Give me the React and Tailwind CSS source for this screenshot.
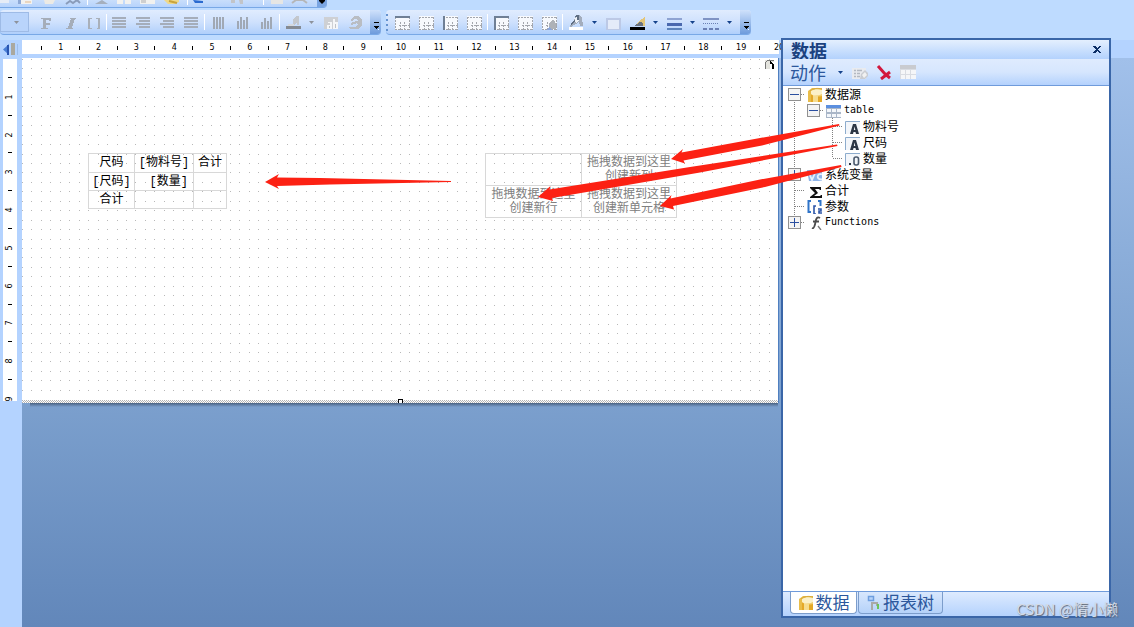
import React from "react";

const CJK = "font-['Liberation_Mono','Noto_Sans_CJK_SC',sans-serif]";
const STEP = 9.45;

function dotPath(cols, rows) {
  let d = "";
  for (let r = 0; r <= rows; r++) {
    for (let c = 0; c <= cols; c++) {
      d += `M${Math.round(c * STEP)} ${Math.round(r * STEP)}h1v1h-1z`;
    }
  }
  return d;
}

function ToolButton({ label, children }) {
  return (
    <button type="button" aria-label={label} className="flex h-full w-6 shrink-0 items-end justify-center pb-[3px]">
      <svg width="16" height="16" viewBox="0 0 16 16" shapeRendering="crispEdges">
        {children}
      </svg>
    </button>
  );
}

function Arrow({ label, color = "#15428b" }) {
  return (
    <button type="button" aria-label={label} className="flex h-full w-3 shrink-0 items-center justify-center">
      <svg width="5" height="3" viewBox="0 0 5 3">
        <path d="M0 0h5L2.5 3z" fill={color} />
      </svg>
    </button>
  );
}

function Separator() {
  return <span className="mx-px h-4 w-px shrink-0 bg-white" />;
}

function Overflow({ label }) {
  return (
    <button
      type="button"
      aria-label={label}
      className="flex h-full w-[11px] shrink-0 items-end justify-center rounded-r bg-gradient-to-b from-[#cfe1fb] to-[#6d9bdc] pb-1"
    >
      <svg width="6" height="8" viewBox="0 0 6 8" shapeRendering="crispEdges">
        <path d="M1 0h5v1H1z" fill="#000" />
        <path d="M0 4h6L3 7z" fill="#000" />
        <path d="M5 7h1v1H4z" fill="#fff" />
      </svg>
    </button>
  );
}

const Lines = ({ rows }) => rows.map(([x, w], i) => <path key={i} d={`M${x} ${2 + i * 3}h${w}v2h-${w}z`} fill="#a5adba" />);

const Bars = ({ tops }) =>
  tops.map((y, i) => <path key={i} d={`M${3 + i * 3} ${y}h2V14h-2z`} fill="#a0a8b4" />);

function BorderIcon({ top, left, paint }) {
  return (
    <>
      <path d="M1 1h15v14H1z" fill="#f7f9fd" />
      <path d="M1 2.5h15M5 10.5h11M1 14.500h15" stroke="#a3a6ad" strokeWidth="1" strokeDasharray="2 1" />
      <path d="M1.5 2v13M6.5 7v8M10.5 7v8M15.5 2v13" stroke="#a3a6ad" strokeWidth="1" strokeDasharray="2 1" />
      {top && <path d="M1 1h15v2H1z" fill="#6f7f95" />}
      {left && <path d="M1 1h2v14H1z" fill="#6f7f95" />}
      {paint && <path d="M8 14V9l3-4h2l2 4v5z" fill="#aeb2b8" />}
      {paint && <path d="M5 15l4-3 2 3z" fill="#8aa6dc" />}
    </>
  );
}

function TopStrip() {
  return (
    <div className="flex h-2 w-[327px] overflow-hidden rounded-br border-b border-[#78a8e6] bg-gradient-to-b from-[#c9defb] to-[#b6d3fc]">
      <svg className="w-[317px]" height="7" viewBox="0 0 317 7">
        <path d="M0 0h9v3H0z" fill="#e6ecf6" />
        <path d="M18 0h14v4H18z" fill="#f2f2f0" />
        <path d="M18 0h3v4h-3z" fill="#8ea9d6" />
        <path d="M25 2h6" stroke="#e1b98e" />
        <path d="M44 0h11l-2 4h-8z" fill="#eceae4" />
        <path d="M66 4l4-3 3 2 4-3 3 3" stroke="#8a9cba" strokeWidth="2" fill="none" />
        <path d="M87.500 0v5" stroke="#fff" />
        <path d="M95 4l7-4 6 4z" fill="#a5afbd" />
        <path d="M117 0h6v4h-6zM125 0h6v4h-6zM140 0h15v4h-15z" fill="#f1f1ef" />
        <path d="M141 0h5v3h-5z" fill="#cfcfcf" />
        <path d="M164 0h15v2l-5 2h-6z" fill="#efd98a" />
        <path d="M169 1l8 2" stroke="#c9a33c" strokeWidth="2" />
        <path d="M187.500 0v5" stroke="#fff" />
        <path d="M193 0l2 3h8V1z" fill="#2a6ad0" />
        <path d="M231 0h4v3h-4zM239 0h4v4h-3z" fill="#c2c4c8" />
        <path d="M263.500 0v5" stroke="#fff" />
        <path d="M271 0h12v4h-12z" fill="#e6e6e4" />
        <path d="M292 3l4-3h7l4 3" stroke="#b5b6b8" strokeWidth="2" fill="none" />
      </svg>
      <button type="button" aria-label="标准工具栏选项" className="flex w-[10px] items-start justify-center bg-[#7aa5e2]">
        <svg width="8" height="5" viewBox="0 0 8 5">
          <path d="M1 0h6v1L4 4 1 1z" fill="#000" />
        </svg>
      </button>
    </div>
  );
}

const BAR = "flex h-[25px] items-stretch rounded border-b border-[#78a8e6] bg-gradient-to-b from-[#e0ecfe] via-[#cfe1fd] to-[#b0cffb]";

function TextToolbar() {
  return (
    <div className={BAR}>
      <button
        type="button"
        aria-label="字号"
        className="mr-[5px] mt-[2px] flex h-5 w-[29px] items-center justify-end border border-[#9ebbe6] bg-[#b9d4fb] pr-[9px]"
      >
        <svg width="5" height="3" viewBox="0 0 5 3">
          <path d="M0 0h5L2.500 3z" fill="#8d929b" />
        </svg>
      </button>
      <ToolButton label="粗体">
        <path d="M3 3h10v3h-2V5H8v3h4v2H8v3h2v1H3v-1h2V4H3z" fill="#a5adb9" />
      </ToolButton>
      <ToolButton label="斜体">
        <path d="M8 3h6v1h-1l-3 9h1v1H4v-1h2l3-9H8z" fill="#a5adb9" />
      </ToolButton>
      <ToolButton label="下划线">
        <path d="M2 3h4v1H4v9h2v1H2zM10 3h4v11h-3v-1h1V4h-2z" fill="#a9b0ba" />
      </ToolButton>
      <span className="h-4 w-px self-center bg-white" />
      <ToolButton label="左对齐"><Lines rows={[[1, 14], [1, 14], [1, 14], [1, 14]]} /></ToolButton>
      <ToolButton label="居中"><Lines rows={[[1, 14], [4, 11], [1, 14], [4, 11]]} /></ToolButton>
      <ToolButton label="右对齐"><Lines rows={[[1, 14], [4, 11], [1, 14], [4, 11]]} /></ToolButton>
      <ToolButton label="两端对齐"><Lines rows={[[1, 14], [1, 14], [1, 14], [1, 14]]} /></ToolButton>
      <div className="flex items-center"><Separator /></div>
      <ToolButton label="顶端对齐"><Bars tops={[2, 2, 2, 2]} /></ToolButton>
      <ToolButton label="垂直居中"><Bars tops={[6, 2, 5, 2]} /></ToolButton>
      <ToolButton label="底端对齐"><Bars tops={[7, 3, 6, 2]} /></ToolButton>
      <div className="flex items-center"><Separator /></div>
      <ToolButton label="文字颜色">
        <path d="M8 10V5l3-4h3v9h-2V7l-2 3z" fill="#c3c7cd" />
        <path d="M3 9h6v2H3z" fill="#d5d9df" />
        <path d="M1 11h15v3H1z" fill="#858b94" />
      </ToolButton>
      <Arrow label="选择文字颜色" color="#8d929b" />
      <span className="w-[2px]" />
      <ToolButton label="突出显示">
        <path d="M1 2h14v12H1z" fill="#ced0d4" />
        <path d="M5 7h4v7H4v-4h3V8H5zM10 4h2v3h3v7h-5z" fill="#f5f6f8" />
        <path d="M6 11h1v2H6zM12 9h1v4h-1z" fill="#c0c3c8" />
      </ToolButton>
      <ToolButton label="旋转文字">
        <path d="M3 5l4-4h5l3 4v5l-4 4H4l-3-2h7l3-2-1-2-5 2-2-1 2-2 5-1 1-1-3-1-3 2z" fill="#b9bdc3" />
      </ToolButton>
      <span className="w-[3px]" />
      <Overflow label="文字工具栏选项" />
    </div>
  );
}

function BorderToolbar() {
  return (
    <div className={BAR}>
      <svg className="w-1" height="24" viewBox="0 0 4 24" shapeRendering="crispEdges">
        <path d="M0 4h2v2H0zM0 9h2v2H0zM0 14h2v2H0zM0 19h2v2H0z" fill="#6593cf" />
      </svg>
      <ToolButton label="上边框"><BorderIcon top /></ToolButton>
      <ToolButton label="下边框"><BorderIcon /></ToolButton>
      <ToolButton label="左边框"><BorderIcon left /></ToolButton>
      <ToolButton label="右边框"><BorderIcon /></ToolButton>
      <div className="flex items-center"><Separator /></div>
      <ToolButton label="全部边框"><BorderIcon top left /></ToolButton>
      <ToolButton label="无边框"><BorderIcon /></ToolButton>
      <ToolButton label="边框样式"><BorderIcon paint /></ToolButton>
      <div className="flex items-center"><Separator /></div>
      <ToolButton label="填充颜色">
        <path d="M1 12h14v3H1z" fill="#fff" />
        <path d="M8 0h3l3 3 1 8h-3l-1-5-3 3-5 3-2-1 5-5z" fill="#a3adbd" />
        <path d="M6 3l4-1 1 3-3 3z" fill="#eef2f8" />
        <path d="M8 0h3v5H9V2H7zM2 9l4-4 1 1-4 4z" fill="#5f6e82" />
      </ToolButton>
      <Arrow label="选择填充颜色" />
      <span className="w-px" />
      <ToolButton label="填充样式">
        <path d="M1 3h15v12H1z" fill="#bcc9e6" />
        <path d="M3 5h11v9H3z" fill="#e4ebf9" />
      </ToolButton>
      <ToolButton label="线条颜色">
        <path d="M6 10l7-6 3-2v9H5z" fill="#e3c67a" />
        <path d="M5 11l6-4 3 1v3z" fill="#6b7380" />
        <path d="M1 12h15v3H1z" fill="#000" />
      </ToolButton>
      <Arrow label="选择线条颜色" />
      <span className="w-px" />
      <ToolButton label="线条宽度">
        <path d="M1 3h15v2H1z" fill="#8ea3d2" />
        <path d="M1 8h15v3H1z" fill="#4a68ae" />
        <path d="M1 13h15v2H1z" fill="#5c82ba" />
      </ToolButton>
      <Arrow label="选择线条宽度" />
      <span className="w-px" />
      <ToolButton label="线条样式">
        <path d="M0 4h16" stroke="#7f93c4" strokeWidth="2" />
        <path d="M0 8.500h16" stroke="#6a7fb4" strokeDasharray="1 1" />
        <path d="M0 13.500h16" stroke="#6a7fb4" strokeWidth="2" strokeDasharray="4 2" />
      </ToolButton>
      <Arrow label="选择线条样式" />
      <span className="w-[5px]" />
      <Overflow label="边框工具栏选项" />
    </div>
  );
}

function HorizontalRuler() {
  return (
    <div className="grid h-[14px] w-[757px] grid-cols-20 bg-white pl-px font-['DejaVu_Sans',sans-serif] text-[8px] leading-4 text-black">
      {Array.from({ length: 20 }, (_, i) => (
        <div key={i} className="flex items-center">
          <span className="w-1/2" />
          <span className="h-1 w-px shrink-0 bg-black" />
          <span className="flex w-1/2 shrink-0 justify-end">
            <span className="flex w-0 justify-center">{i + 1}</span>
          </span>
        </div>
      ))}
    </div>
  );
}

function VerticalRuler() {
  return (
    <div className="mx-[3px] mt-px h-[342px] w-[14px] overflow-hidden bg-white font-['DejaVu_Sans',sans-serif] text-[8px] leading-[14px] text-black">
      <div className="grid h-[340px] grid-rows-9">
        {Array.from({ length: 9 }, (_, i) => (
          <div key={i} className="flex flex-col items-center">
            <span className="h-1/2" />
            <span className="h-px w-1 shrink-0 bg-black" />
            <span className="flex h-1/2 shrink-0 flex-col justify-end">
              <span className="flex h-0 items-center justify-center">
                <span className="-rotate-90">{i + 1}</span>
              </span>
            </span>
          </div>
        ))}
      </div>
    </div>
  );
}

const CELL = "border border-[#d8d8d8] p-0 font-normal";

function CrossTable() {
  return (
    <table className={`absolute left-[66px] top-[95px] border-collapse text-center text-xs leading-4 text-black ${CJK}`}>
      <tbody>
        <tr className="h-[19px]">
          <th className={`${CELL} w-[46px]`}>尺码</th>
          <th className={`${CELL} w-[59px]`}>[物料号]</th>
          <th className={`${CELL} w-[33px]`}>合计</th>
        </tr>
        <tr className="h-[18px]">
          <th className={CELL}>[尺码]</th>
          <td className={`${CELL} pr-[5px] text-right`}>[数量]</td>
          <td className={CELL} />
        </tr>
        <tr className="h-[18px]">
          <th className={CELL}>合计</th>
          <td className={CELL} />
          <td className={CELL} />
        </tr>
      </tbody>
    </table>
  );
}

function DropTable() {
  return (
    <table className={`absolute left-[463px] top-[95px] border-collapse text-center text-xs leading-[14px] text-[#808080] ${CJK}`}>
      <tbody>
        <tr className="h-8">
          <td className={`${CELL} w-24`} />
          <td className={`${CELL} w-[95px]`}>拖拽数据到这里<br />创建新列</td>
        </tr>
        <tr className="h-8">
          <td className={CELL}>拖拽数据到这里<br />创建新行</td>
          <td className={CELL}>拖拽数据到这里<br />创建新单元格</td>
        </tr>
      </tbody>
    </table>
  );
}

function Page() {
  return (
    <div className="relative h-[345px] w-[757px] border-r border-[#4f7fc0] bg-white">
      <svg className="absolute left-0 top-0" width="756" height="345" viewBox="0 0 756 345" shapeRendering="crispEdges">
        <defs>
          <pattern id="hatch" width="2" height="2" patternUnits="userSpaceOnUse">
            <path d="M0 0h1v1H0zM1 1h1v1H1z" fill="#b4b4b4" />
          </pattern>
        </defs>
        <path d={dotPath(79, 35)} fill="#b8b8b8" transform="translate(0 1)" />
        <path d="M0 341h756v4H0z" fill="#fff" />
        <path d="M0 342h756v3H0z" fill="url(#hatch)" />
        <path d="M376.500 345v-3.500h4v4" fill="#fff" stroke="#000" />
        <path d="M743 11V2h9v9" fill="#e4e4de" />
        <path d="M743.500 11V4.500l2-2h6" fill="none" stroke="#777" />
        <path d="M748 4h4v7h-4z" fill="#fff" />
        <path d="M748 3l4 3v5h-2V6h-2z" fill="#000" />
      </svg>
      <div className="absolute left-2 right-0 top-full h-1 bg-gradient-to-b from-[#4a6282] to-transparent" />
      <CrossTable />
      <DropTable />
    </div>
  );
}

const icons = {
  db: (
    <>
      <path d="M1 5l4-3h10v3H5v11H1z" fill="#e9bd4a" />
      <path d="M4 6h11v10H4z" fill="#f0cd6c" />
      <path d="M4 8c3 3 7 3 11 2v6H4z" fill="#e4a827" />
      <path d="M6 8c2 2 3 2 5 2v6H6z" fill="#f6dc8e" />
      <path d="M4 5c3-2 8-2 11-1v4c-4 2-8 2-11 0z" fill="#fbf0c8" />
      <path d="M3 5c3-3 8-3 12-2" fill="none" stroke="#d8a93c" />
    </>
  ),
  table: (
    <>
      <path d="M0 3h15v13H0z" fill="#a9b6c8" />
      <path d="M0 3h15v3H0z" fill="#5b8fdf" />
      <path d="M1 7h4v3H1zM6 7h4v3H6zM11 7h4v3h-4zM1 12h4v3H1zM6 12h4v3H6zM11 12h4v3h-4z" fill="#f4f7fb" />
    </>
  ),
  text: (
    <>
      <path d="M0 3h15v13H0z" fill="#f3f6fa" />
      <path d="M.5 16V3.500H15" fill="none" stroke="#8daccd" />
      <path d="M5 16L8 6h3l3 10h-3l-.5-2H8.500L8 16zM8.800 12h1.500L9.600 8.500z" fill="#2b3645" />
    </>
  ),
  number: (
    <>
      <path d="M0 3h15v13H0z" fill="#f3f6fa" />
      <path d="M.5 16V3.500H15" fill="none" stroke="#8daccd" />
      <path d="M4 13h2v2H4z" fill="#2b3645" />
      <rect x="9" y="7" width="4.500" height="8" rx="2" fill="none" stroke="#4a596d" strokeWidth="1.600" />
    </>
  ),
  variable: (
    <>
      <path d="M0 4h15v11H2z" fill="#8fb4ea" />
      <path d="M2 7l3 7 3-7M15 8.500c-5-2-6 5-1 5h2" fill="none" stroke="#e8f1fd" strokeWidth="1.800" />
    </>
  ),
  sum: <path d="M3 5h11v3h-1l-1-1H8l3 4-4 3h6l1-1h1v3H3v-1l5-4-5-5z" fill="#111" />,
  params: (
    <>
      <path d="M4 3H1.500v11H4M11 3h2.500v5" fill="none" stroke="#2f74c9" strokeWidth="2" />
      <path d="M9 8H7v8h2M11 11h3v2h-2v2h3" fill="none" stroke="#2c55a8" strokeWidth="1.600" />
    </>
  ),
  fx: (
    <>
      <path d="M13 4c-3-2-4 1-4.500 4S7 15 5 14M6 7.500h6" fill="none" stroke="#4c4c4c" strokeWidth="1.800" />
      <path d="M11 12l3 4" stroke="#777" strokeWidth="1.300" />
    </>
  ),
};

function Gutter({ up, down, right, box, label }) {
  const drawing = (
    <svg width="19" height="16" viewBox="0 0 19 16" className="block">
      <g stroke="#808080" strokeDasharray="1 1" fill="none">
        {up && <path d="M9.500 0v8" />}
        {down && <path d="M9.500 8v8" />}
        {right && <path d="M10 8.500h11" />}
      </g>
      {box && <rect x="3.500" y="2.500" width="12" height="12" fill="#f4f4f4" stroke="#919191" />}
      {box && <path d="M5 8.500h9" stroke="#2b4fa0" />}
      {box === "plus" && <path d="M9.500 4v9" stroke="#2b4fa0" />}
    </svg>
  );
  return box ? (
    <button type="button" aria-label={label} className="shrink-0">{drawing}</button>
  ) : (
    <span className="shrink-0">{drawing}</span>
  );
}

function TreeRow({ gutters, icon, text }) {
  return (
    <div className="flex h-4 items-center">
      {gutters.map((g, i) => <Gutter key={i} {...g} label={text} />)}
      <svg width="15" height="16" viewBox="0 0 15 16" className="ml-[3px] mr-[3px] shrink-0">
        {icons[icon]}
      </svg>
      <span className="whitespace-nowrap">{text}</span>
    </div>
  );
}

const trunk = { up: true, down: true };
const fields = [
  ["物料号", "text", true],
  ["尺码", "text", true],
  ["数量", "number", false],
];

function Tree() {
  return (
    <ul className="flex-1 bg-white pl-[2px] font-['Noto_Sans_CJK_SC',sans-serif] text-xs leading-4 text-black">
      <li>
        <TreeRow gutters={[{ down: true, right: true, box: "minus" }]} icon="db" text="数据源" />
        <ul>
          <li className="font-['DejaVu_Sans_Mono',monospace] text-[10px] leading-[18px]">
            <TreeRow gutters={[trunk, { right: true, box: "minus" }]} icon="table" text="table" />
          </li>
          {fields.map(([text, icon, down]) => (
            <li key={text}>
              <TreeRow gutters={[trunk, {}, { up: true, down, right: true }]} icon={icon} text={text} />
            </li>
          ))}
        </ul>
      </li>
      <li><TreeRow gutters={[{ ...trunk, right: true, box: "plus" }]} icon="variable" text="系统变量" /></li>
      <li><TreeRow gutters={[{ ...trunk, right: true }]} icon="sum" text="合计" /></li>
      <li><TreeRow gutters={[{ ...trunk, right: true }]} icon="params" text="参数" /></li>
      <li className="font-['DejaVu_Sans_Mono',monospace] text-[10px] leading-[18px]">
        <TreeRow gutters={[{ up: true, right: true, box: "plus" }]} icon="fx" text="Functions" />
      </li>
    </ul>
  );
}

function DataPanel() {
  return (
    <section className="absolute left-[781px] top-[38px] flex h-[580px] w-[330px] flex-col border-2 border-[#3a66a8] bg-[#dce9fd] font-['Noto_Sans_CJK_SC',sans-serif] text-lg leading-5 text-[#2c579c]">
      <header className="flex h-[19px] items-center justify-between bg-gradient-to-b from-[#e4effe] to-[#b3d2fd] pl-2 pr-2">
        <h2 className="font-bold leading-4 text-[#1b417f]">数据</h2>
        <button type="button" aria-label="关闭">
          <svg width="8" height="7" viewBox="0 0 8 7" shapeRendering="crispEdges" className="block">
            <path d="M0 0h2l2 2 2-2h2L5 3.500 8 7H6L4 5 2 7H0l3-3.500z" fill="#0c2f66" />
          </svg>
        </button>
      </header>
      <div className="flex h-[27px] items-center border-b border-[#6f9bdb] bg-gradient-to-b from-[#dfebfe] via-[#d6e6fe] to-[#b4d2fd] pl-[7px]">
        <button type="button" className="flex items-center">
          动作
          <svg width="5" height="3" viewBox="0 0 5 3" className="ml-3 mr-[9px]">
            <path d="M0 0h5L2.500 3z" fill="#15428b" />
          </svg>
        </button>
        <div className="flex gap-2">
          <button type="button" aria-label="编辑">
            <svg width="16" height="16" viewBox="0 0 16 16" className="block">
              <path d="M0 4h14v11H0z" fill="#e9ebef" />
              <path d="M2 6.500h2M5 6.500h5M2 9.500h2M5 9.500h3M2 12.500h2M5 12.500h3" stroke="#b4b9c1" strokeWidth="1.500" />
              <path d="M8 15l1-5 4-4 3 3v3l-3 3z" fill="#c9ccd1" />
              <path d="M10 11l3-3 2 3-3 3z" fill="#f1f1f1" />
            </svg>
          </button>
          <button type="button" aria-label="删除">
            <svg width="16" height="16" viewBox="0 0 16 16" className="block">
              <path d="M2 2l7 8 5 4M14 8l-9 7" fill="none" stroke="#d2173c" strokeWidth="3" />
            </svg>
          </button>
          <button type="button" aria-label="查看数据">
            <svg width="16" height="16" viewBox="0 0 16 16" className="block">
              <path d="M0 1h16v14H0z" fill="#d9dce2" />
              <path d="M0 1h16v4H0z" fill="#c9cbd0" />
              <path d="M1 6h4v4H1zM6 6h4v4H6zM11 6h5v4h-5zM1 11h4v4H1zM6 11h4v4H6zM11 11h5v4h-5z" fill="#f5f6f8" />
            </svg>
          </button>
        </div>
      </div>
      <Tree />
      <footer className="flex h-[25px] items-start gap-px border-t border-[#6f9bdb] bg-gradient-to-b from-[#deebfe] to-[#b4d2fd] pl-[7px] text-[17px] leading-4">
        <button type="button" className="flex h-[22px] w-[67px] items-center justify-center gap-[3px] rounded-b border border-t-0 border-[#7c9dcb] bg-white pb-[2px]">
          <svg width="15" height="16" viewBox="0 0 15 16">{icons.db}</svg>
          数据
        </button>
        <button type="button" className="flex h-[22px] w-[85px] items-center justify-center gap-[3px] rounded-b border border-t-0 border-[#7c9dcb] bg-gradient-to-b from-[#d8e7fd] to-[#b5d2f9] pb-[2px]">
          <svg width="13" height="16" viewBox="0 0 13 16">
            <path d="M1.500 2.500h5v4h-5z" fill="#b8d3f8" stroke="#6e9edf" strokeWidth="1.500" />
            <path d="M5 8v8M5 9h5v3" stroke="#a9a9a6" strokeWidth="2" fill="none" />
            <path d="M10 10h2v5h-2z" fill="#6cc558" />
          </svg>
          报表树
        </button>
      </footer>
    </section>
  );
}

function Annotations() {
  return (
    <svg className="pointer-events-none absolute left-0 top-0" width="860" height="220" viewBox="0 0 860 220" fill="#fc2113">
      <path d="M671 159L683 149 681.500 152.500 760 138 839 124 839.500 125.500 762 145.500 683.500 160.500 685 163.500z" />
      <path d="M538 197L550.500 186 549.500 189.500 690 167 837 144.500 837.500 146 700 172.500 552 198 553 201z" />
      <path d="M660 206L671.500 195 670.500 198.500 760 179.500 841 165 841.500 167 765 187 673 206 674 209.500z" />
      <path d="M265 182L279 174 277 177.500 320 178 451 181 451 182 330 184.500 277 186 279 189z" />
    </svg>
  );
}

export default function App() {
  return (
    <div className="relative flex min-h-screen flex-col overflow-hidden bg-[#bedbff]">
      <header className="flex h-10 flex-col gap-[2px]">
        <TopStrip />
        <div className="flex gap-[5px]">
          <TextToolbar />
          <BorderToolbar />
        </div>
      </header>
      <main className="flex flex-1 bg-[#b4d3ff]">
        <aside className="w-[22px] shrink-0">
          <svg width="22" height="18" viewBox="0 0 22 18" className="block">
            <path d="M3 9.500L9 4v11z" fill="#4a7fd6" />
            <path d="M7 5h2v10H7z" fill="#2a55b0" />
            <path d="M11 3h4v12h-4z" fill="#aaa89f" />
            <path d="M17 4h1v11h-1z" fill="#9dbdea" />
          </svg>
          <VerticalRuler />
        </aside>
        <div className="flex min-w-0 flex-1 flex-col">
          <div className="h-[18px]"><HorizontalRuler /></div>
          <div className="flex-1 bg-gradient-to-b from-[#a1c0ea] via-[#7fa3d0] via-[55%] to-[#6287ba]">
            <Page />
          </div>
        </div>
      </main>
      <DataPanel />
      <Annotations />
      <p className="absolute bottom-2 right-4 font-['Noto_Sans_CJK_SC',sans-serif] text-[15px] leading-5 text-[#d3dbe6] [text-shadow:1px_1px_1px_#5a6270]">
        CSDN @惰小懒
      </p>
    </div>
  );
}
